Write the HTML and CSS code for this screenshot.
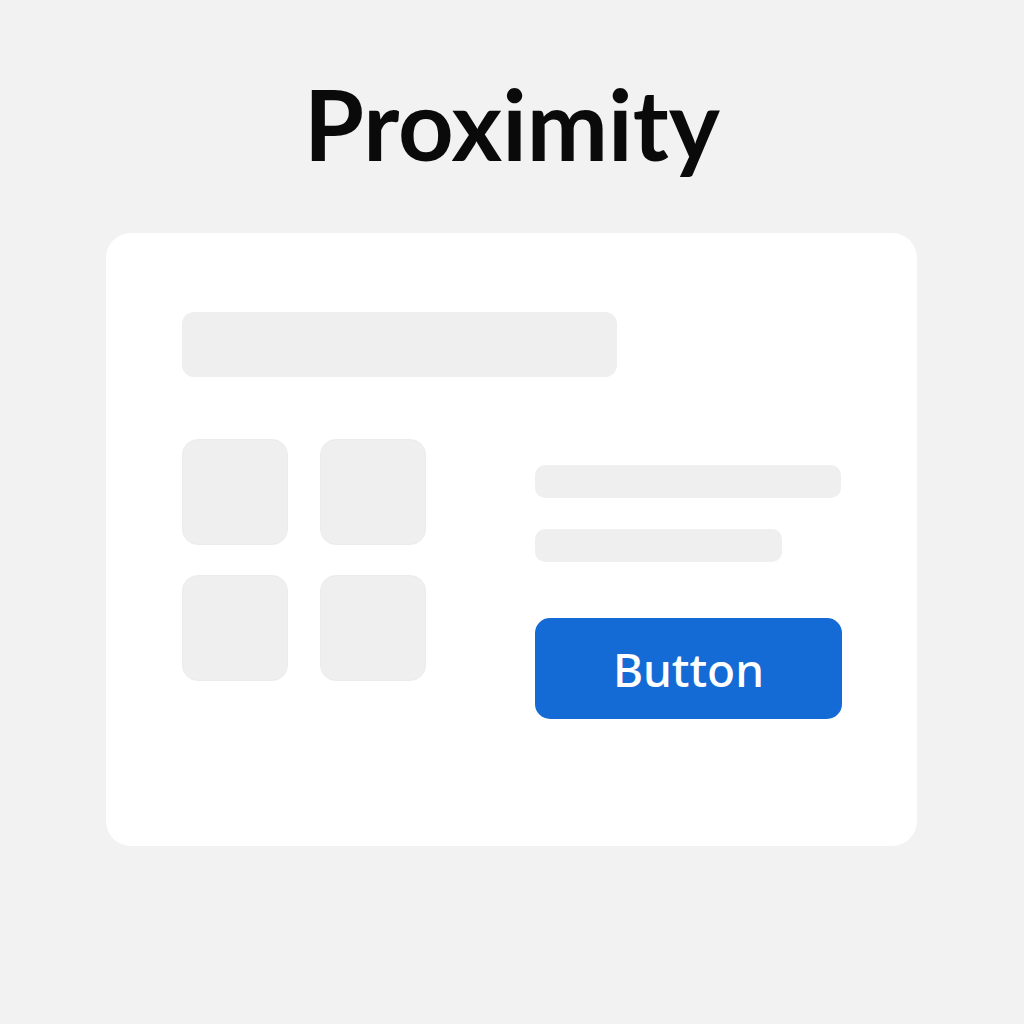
FILE: index.html
```html
<!DOCTYPE html>
<html lang="en">
<head>
    <meta charset="UTF-8">
    <meta name="viewport" content="width=device-width, initial-scale=1.0">
    <title>Proximity</title>
    <link rel="stylesheet" href="styles.css">
</head>
<body>

<h1 class="title">Proximity</h1>

<div class="card">
    <div class="bar-wide"></div>

    <div class="row">
        <div class="grid">
            <div class="tile"></div>
            <div class="tile"></div>
            <div class="tile"></div>
            <div class="tile"></div>
        </div>

        <div class="side">
            <div class="line line-long"></div>
            <div class="line line-short"></div>
            <button class="btn">Button</button>
        </div>
    </div>
</div>

</body>
</html>
```

FILE: styles.css
```css
body {
    margin: 0;
    background-color: #f2f2f2;
    font-family: "Noto Sans", "Open Sans", sans-serif;
}

.title {
    margin: 0;
    padding-top: 64px;
    height: 169px;
    text-align: center;
    font-family: Lato, "Noto Sans", sans-serif;
    font-size: 97px;
    font-weight: 700;
    line-height: 120px;
    color: #0a0a0a;
}

.card {
    width: 811px;
    height: 613px;
    box-sizing: border-box;
    margin-left: 106px;
    padding: 79px 76px;
    background-color: #fff;
    border-radius: 25px;
}

.bar-wide {
    width: 435px;
    height: 65px;
    background-color: #efefef;
    border-radius: 12px;
}

.row {
    display: flex;
    margin-top: 62px;
}

.grid {
    display: grid;
    grid-template-columns: 106px 106px;
    grid-auto-rows: 106px;
    column-gap: 32px;
    row-gap: 30px;
}

.tile {
    background-color: #efefef;
    border: 1px solid #ebebeb;
    border-radius: 16px;
}

.side {
    margin-left: 109px;
    padding-top: 26px;
    width: 307px;
}

.line {
    height: 33px;
    background-color: #efefef;
    border-radius: 10px;
}

.line-long {
    width: 306px;
}

.line-short {
    width: 247px;
    margin-top: 31px;
}

.btn {
    display: block;
    margin-top: 56px;
    width: 307px;
    height: 101px;
    border: none;
    border-radius: 15px;
    background-color: #156bd6;
    color: #fff;
    font-family: "Noto Sans", "Open Sans", sans-serif;
    font-size: 46px;
    font-weight: 500;
}
```
